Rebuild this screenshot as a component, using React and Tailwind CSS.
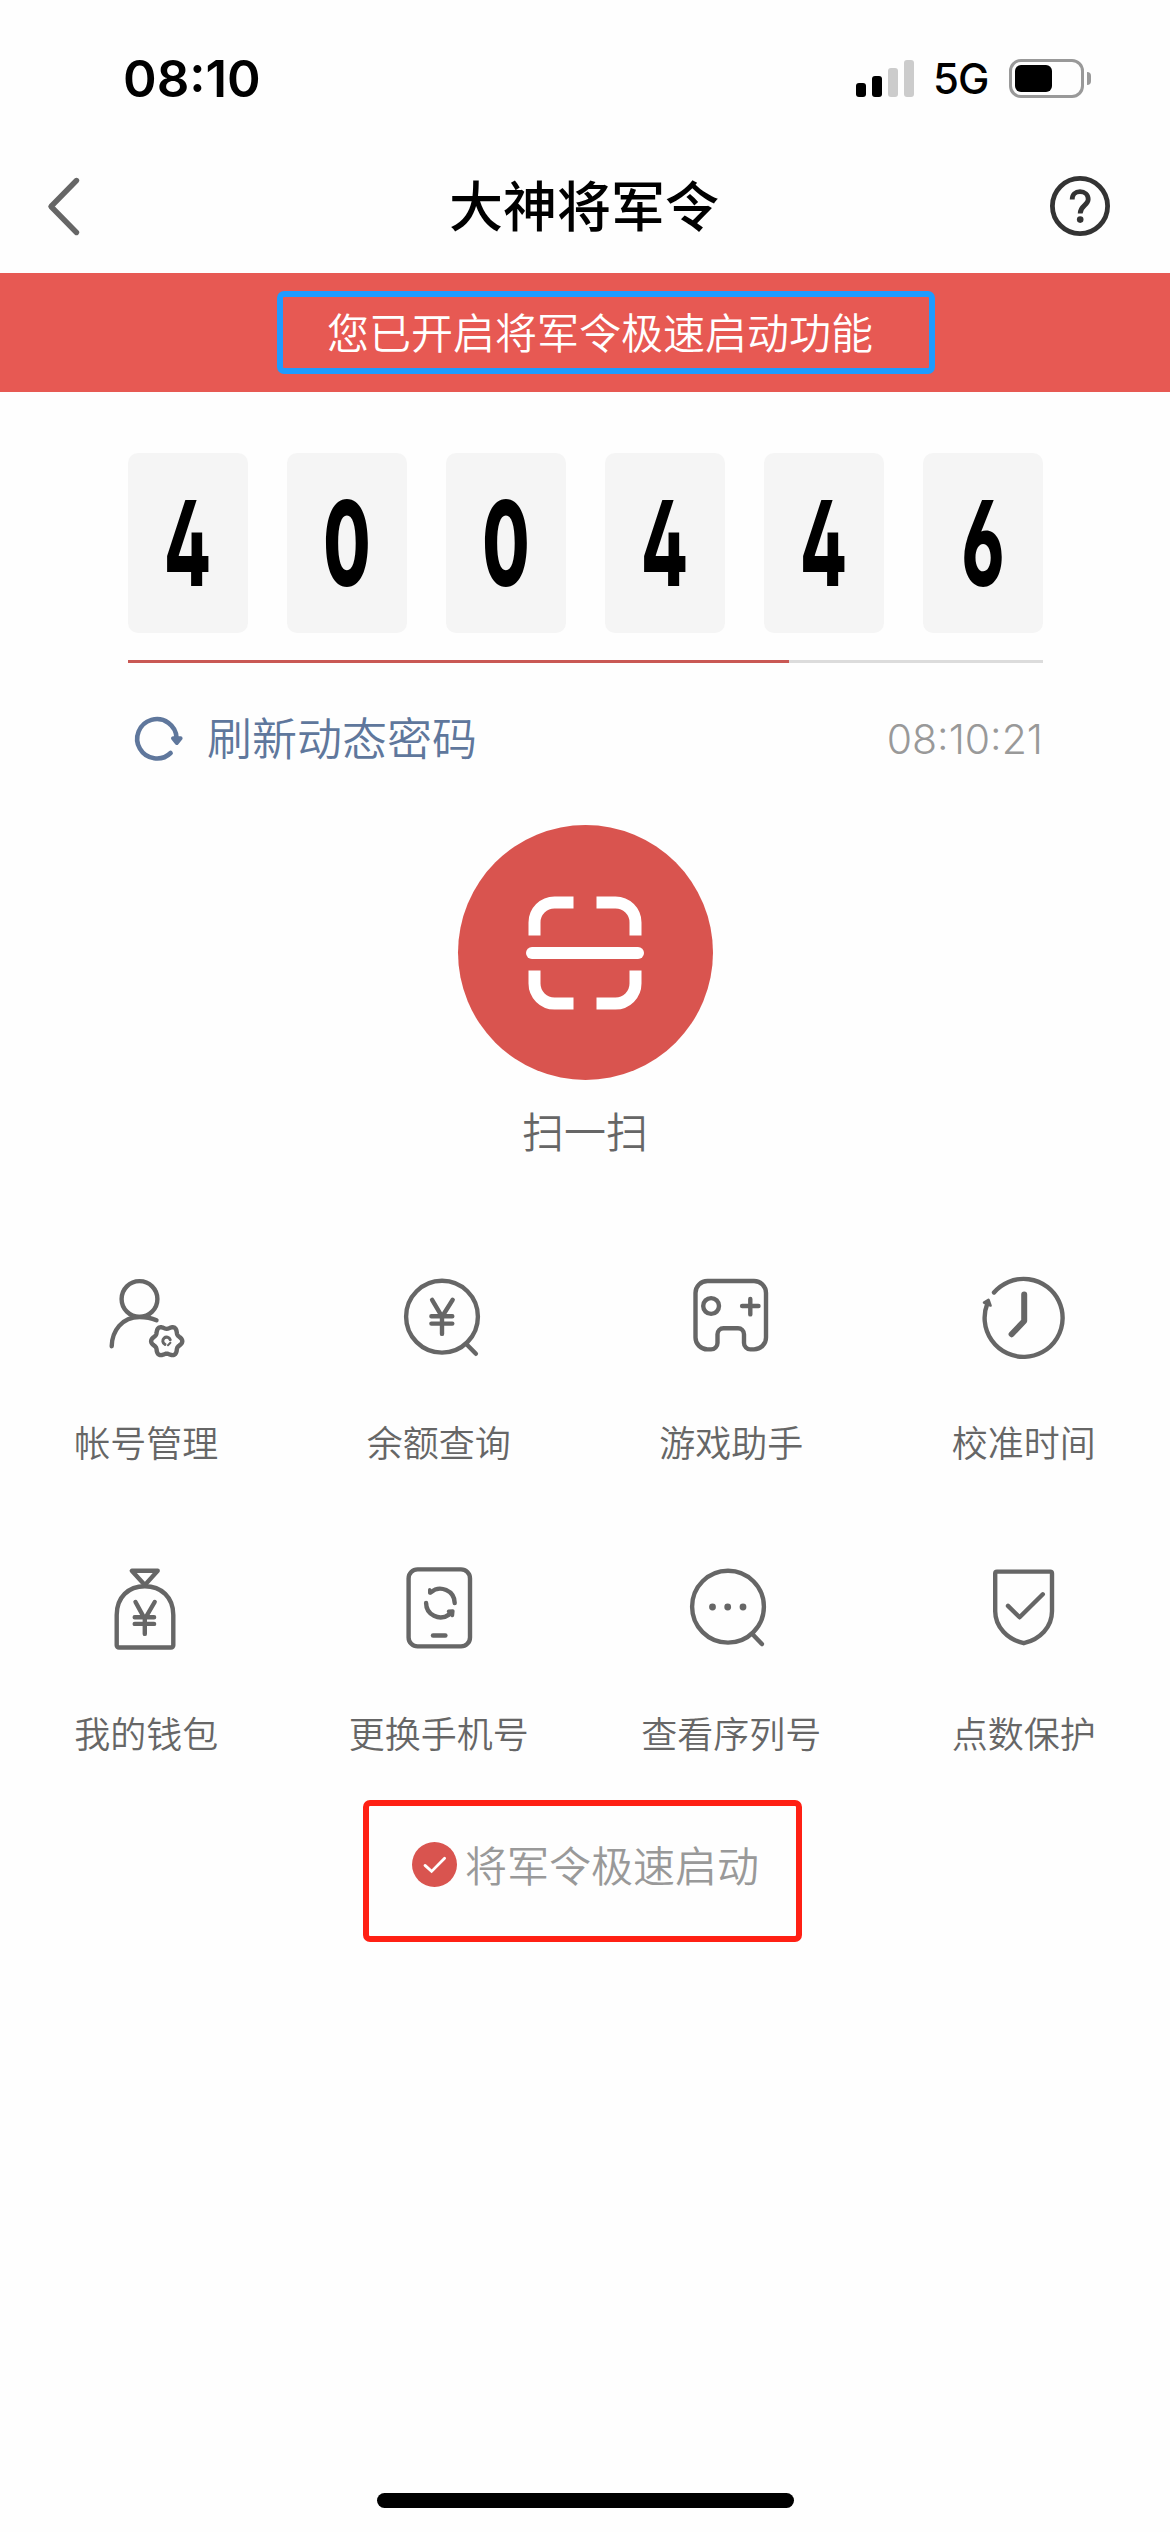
const CODE = ['4', '0', '0', '4', '4', '6'];

// Wavy outline of the small gear: six soft lobes around (80.7, 85.2)
const GEAR = (() => {
  const pts = [];
  for (let i = 0; i < 72; i++) {
    const a = (i * Math.PI) / 36;
    const r = 14 + 1.6 * Math.cos(6 * a);
    pts.push(`${(80.7 + r * Math.cos(a)).toFixed(2)} ${(85.2 + r * Math.sin(a)).toFixed(2)}`);
  }
  return `M${pts.join('L')}Z`;
})();

function Icon({ viewBox = '0 0 120 120', children }) {
  return (
    <svg
      className="size-[120px]"
      viewBox={viewBox}
      fill="none"
      stroke="#666"
      strokeWidth="4.4"
      strokeLinecap="round"
      strokeLinejoin="round"
    >
      {children}
    </svg>
  );
}

function AccountIcon() {
  return (
    <Icon>
      <circle cx="53.5" cy="43" r="17.9" />
      <path d="M25.7 90.3C26 75 36 61 53.5 61Q63 61 70.5 64.3" />
      <path d={GEAR} />
      <path d="M79 88.4a3.8 3.8 0 1 1 5.2-4.6" strokeWidth="3" />
      <path d="M82 89.2l2.4-2.4" strokeWidth="2" />
    </Icon>
  );
}

function BalanceIcon() {
  return (
    <Icon viewBox="-2 0 120 120">
      <circle cx="61" cy="60.7" r="35.9" />
      <path d="M85.3 88l9.6 9.8" />
      <path d="M51.1 43.8L61 60.7l10.7-16.9M61 60.7v17.2M50.4 60.3h20.9M50.4 67.6h20.9" />
    </Icon>
  );
}

function GameIcon() {
  return (
    <Icon viewBox="-0.5 0 120 120">
      <path d="M36 25H82.5a12 12 0 0 1 12 12V81.4a12 12 0 0 1-12 12H79a6.5 6.5 0 0 1-6.5-6.5V78.3a6 6 0 0 0-6-6H52a6 6 0 0 0-6 6V86.9a6.5 6.5 0 0 1-6.5 6.5H36a12 12 0 0 1-12-12V37a12 12 0 0 1 12-12Z" />
      <circle cx="39.6" cy="50" r="7.9" />
      <path d="M70.6 50h16.4M78.8 43v15.4" />
    </Icon>
  );
}

function ClockIcon() {
  return (
    <Icon viewBox="-2 0 120 120">
      <path d="M28 36.5A39 39 0 1 1 21.4 47.4" />
      <path d="M18 46.6L22.5 43.8L24.6 49.6Z" fill="#666" strokeWidth="2.5" />
      <path d="M58.2 38.6V65L45.6 78.2" strokeWidth="6" />
    </Icon>
  );
}

function WalletIcon() {
  return (
    <Icon viewBox="-0.5 0 120 120">
      <path d="M45.3 23.8H71.2L58.3 38.1Z" />
      <path d="M32.5 100.5a2.3 2.3 0 0 1-2.3-2.3V68C30.2 50 42 39.2 58.3 39.2S86.8 50 86.8 68V98.2a2.3 2.3 0 0 1-2.3 2.3Z" />
      <path d="M49 55L58.3 72L68.2 55M58.3 72V86.9M48.2 70.3h19.4M48.2 76.9h19.4" />
    </Icon>
  );
}

function PhoneIcon() {
  return (
    <Icon viewBox="-2 0 120 120">
      <rect x="27.6" y="22.4" width="61.4" height="77" rx="9" />
      <path d="M49.8 45.4A14.4 14.4 0 0 1 73.7 56M45.1 56A14.4 14.4 0 0 0 68 67.6" />
      <path d="M48.7 42.6V46" strokeWidth="3.4" />
      <path d="M67.6 64.4L71.8 64L71.4 68.4Z" fill="#666" strokeWidth="3.6" />
      <path d="M52 88.5H64.4" />
    </Icon>
  );
}

function SerialIcon() {
  return (
    <Icon viewBox="-0.5 0 120 120">
      <circle cx="56.5" cy="59.7" r="35.9" />
      <path d="M80.8 86.9l9.6 10.2" />
      <g fill="#666" stroke="none">
        <circle cx="41" cy="60" r="3.4" />
        <circle cx="56.2" cy="60" r="3.4" />
        <circle cx="71.5" cy="60" r="3.4" />
      </g>
    </Icon>
  );
}

function ShieldIcon() {
  return (
    <Icon viewBox="-2 0 120 120">
      <path d="M31 24.6H84.2a1.8 1.8 0 0 1 1.8 1.8V64.3C86 80 74 92.6 57.8 96.2C41.6 92.6 29.2 80 29.2 64.3V26.4a1.8 1.8 0 0 1 1.8-1.8Z" />
      <path d="M42 58.9L53.6 70.3L76.8 47.3" />
    </Icon>
  );
}

const TOOLS = [
  { label: '帐号管理', icon: AccountIcon },
  { label: '余额查询', icon: BalanceIcon },
  { label: '游戏助手', icon: GameIcon },
  { label: '校准时间', icon: ClockIcon },
  { label: '我的钱包', icon: WalletIcon },
  { label: '更换手机号', icon: PhoneIcon },
  { label: '查看序列号', icon: SerialIcon },
  { label: '点数保护', icon: ShieldIcon },
];

function StatusBar() {
  return (
    <div className="flex h-[153px] items-center justify-between pl-[123px] pr-[79px] pt-[3px] font-['Inter',sans-serif] text-black">
      <span className="text-[51px] font-semibold leading-none">08:10</span>
      <div className="flex items-center">
        <div className="flex items-end gap-[6px]">
          <i className="h-[14px] w-[10px] rounded-[3px] bg-black" />
          <i className="h-[21px] w-[10px] rounded-[3px] bg-black" />
          <i className="h-[29px] w-[10px] rounded-[3px] bg-[#ccc]" />
          <i className="h-[37px] w-[10px] rounded-[3px] bg-[#ccc]" />
        </div>
        <span className="ml-[19px] w-[76px] pt-[2px] text-[42px] font-medium leading-none tracking-[-1px]">5G</span>
        <div className="h-[39px] w-[75px] rounded-[12px] border-[3px] border-[#999] p-[3px]">
          <div className="h-full w-[37px] rounded-[6px] bg-black" />
        </div>
        <div className="ml-[3px] h-[13px] w-[4px] rounded-r-full bg-[#999]" />
      </div>
    </div>
  );
}

function Header() {
  return (
    <div className="flex h-[120px] items-center justify-between pb-[14px] pl-[45px] pr-[57px]">
      <svg className="h-[62px] w-[76px]" viewBox="0 0 76 62" fill="none" stroke="#666" strokeWidth="5.4" strokeLinecap="round" strokeLinejoin="round">
        <path d="M31.5 5.5L6 31.5L31.5 57.5" />
      </svg>
      <h1 className="pb-[4px] text-[54px] font-medium leading-none text-black">大神将军令</h1>
      <svg className="size-[66px]" viewBox="0 0 66 66" fill="none" stroke="#333" strokeWidth="4.8">
        <circle cx="33" cy="33" r="27.6" />
        <path d="M25.2 26.4C25.2 21.4 28.4 18.6 33 18.6S41.2 21.6 41.2 26.2C41.2 32.4 33.2 32.6 33.2 40.4" />
        <circle cx="33.2" cy="46.6" r="3.3" fill="#333" stroke="none" />
      </svg>
    </div>
  );
}

export default function App() {
  return (
    <div className="flex h-[2532px] w-[1170px] flex-col overflow-hidden bg-[#fefefe] font-['Noto_Sans_CJK_SC',sans-serif] font-[350]">
      <StatusBar />
      <Header />

      <div className="flex h-[119px] items-center bg-[#e75953] pl-[277px]">
        <div className="flex h-[83px] w-[658px] items-center rounded-[7px] border-[6px] border-[#1e9bff] pb-[3px] pl-[44px] text-[42px] leading-none text-white">
          <span className="whitespace-nowrap">您已开启将军令极速启动功能</span>
        </div>
      </div>

      <div className="px-[128px] pt-[61px]">
        <div className="flex w-[915px] justify-between">
          {CODE.map((digit, i) => (
            <div key={i} className="flex h-[180px] w-[120px] items-center justify-center rounded-[10px] bg-[#f5f5f5]">
              <span className="scale-x-[0.58] font-['Inter',sans-serif] text-[118px] font-extrabold leading-none text-black [font-feature-settings:'cv02','cv03']">
                {digit}
              </span>
            </div>
          ))}
        </div>
        <div className="mt-[27px] h-[3px] w-[915px] bg-[#dcdcdc]">
          <div className="h-full w-[661px] bg-[#c95854]" />
        </div>
        <div className="mt-[43px] flex h-[64px] w-[915px] items-center justify-between">
          <div className="flex items-center text-[#5f779c]">
            <svg className="h-[50px] w-[60px]" viewBox="0 0 60 50" fill="none" stroke="currentColor" strokeWidth="4.6" strokeLinecap="round" strokeLinejoin="round">
              <path d="M42.6 40A19.7 19.7 0 1 1 48.6 25" />
              <path d="M45 25.2H52.6L48.8 30Z" fill="currentColor" strokeWidth="4" />
            </svg>
            <span className="ml-[19px] pb-[4px] text-[45px] leading-none">刷新动态密码</span>
          </div>
          <span className="pt-[2px] font-['Inter',sans-serif] text-[41px] font-light leading-none text-[#999]">08:10:21</span>
        </div>
      </div>

      <div className="mt-[55px] flex flex-col items-center">
        <div className="flex size-[255px] items-center justify-center rounded-full bg-[#d9544f]">
          <svg className="size-[120px]" viewBox="0 0 120 120" fill="none" stroke="#fff" strokeWidth="12">
            <path d="M9.5 42.5V29.5A20 20 0 0 1 29.5 9.5H48.5M71.5 9.5H90.5A20 20 0 0 1 110.5 29.5V42.5M110.5 77.5V90.5A20 20 0 0 1 90.5 110.5H71.5M48.5 110.5H29.5A20 20 0 0 1 9.5 90.5V77.5" />
            <path d="M7 60H113" strokeLinecap="round" />
          </svg>
        </div>
        <span className="mt-[29px] text-[42px] leading-none text-[#666]">扫一扫</span>
      </div>

      <div className="mt-[105px] grid grid-cols-4">
        {TOOLS.map(({ label, icon: ToolIcon }) => (
          <div key={label} className="flex h-[291px] flex-col items-center">
            <ToolIcon />
            <span className="mt-[47px] text-[36px] leading-none text-[#666]">{label}</span>
          </div>
        ))}
      </div>

      <div className="-mt-[38px] ml-[363px] flex h-[142px] w-[439px] items-center rounded-[7px] border-[6px] border-[#ff2014] pb-[13px] pl-[43px]">
        <svg className="size-[45px]" viewBox="0 0 45 45">
          <circle cx="22.5" cy="22.5" r="22.5" fill="#d9544f" />
          <path d="M13 23.4L19.6 29.4L32.6 16.2" fill="none" stroke="#fff" strokeWidth="2.8" strokeLinecap="round" />
        </svg>
        <span className="ml-[8px] whitespace-nowrap pb-[1px] text-[42px] leading-none text-[#999]">将军令极速启动</span>
      </div>

      <div className="mx-auto mb-[24px] mt-auto h-[15px] w-[417px] rounded-full bg-black" />
    </div>
  );
}
